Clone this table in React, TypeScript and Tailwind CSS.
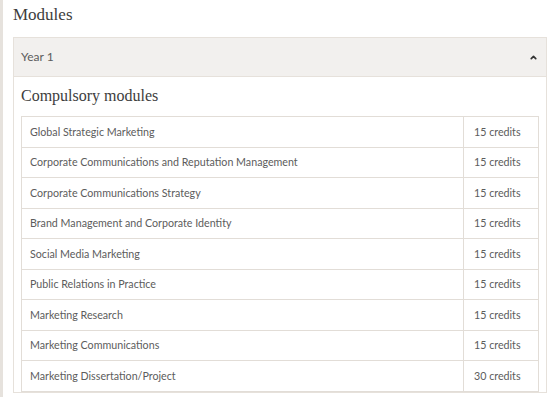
import { ChevronUp } from "lucide-react";

const MODULES: [string, number][] = [
  ["Global Strategic Marketing", 15],
  ["Corporate Communications and Reputation Management", 15],
  ["Corporate Communications Strategy", 15],
  ["Brand Management and Corporate Identity", 15],
  ["Social Media Marketing", 15],
  ["Public Relations in Practice", 15],
  ["Marketing Research", 15],
  ["Marketing Communications", 15],
  ["Marketing Dissertation/Project", 30],
];

export default function App() {
  return (
    <div className="h-[397px] w-[550px] overflow-hidden border-l-[3px] border-[#e6e2dd] bg-white pl-[10px] pr-[3px] font-['Lato',sans-serif] text-[#5c5c5c]">
      <h2 className="pt-[3px] font-['Liberation_Serif',serif] text-[17px] leading-[24px] text-[#3d3d3d]">
        Modules
      </h2>

      <div className="mt-[10px] border border-[#e6e1db]">
        {/* Accordion header */}
        <div className="flex h-[39px] items-center justify-between border-b border-[#e6e1db] bg-[#f2f0ee] pl-[7px] pr-[8px] text-[12px]">
          <span>Year 1</span>
          <ChevronUp className="h-[9px] w-[9px] text-[#333]" strokeWidth={4.5} />
        </div>

        {/* Body */}
        <div className="px-[7px] pt-[8px]">
          <h3 className="mb-[9px] font-['Liberation_Serif',serif] text-[16px] leading-[22px] text-[#3d3d3d]">
            Compulsory modules
          </h3>
          <table className="w-full border-collapse text-[10.7px]">
            <tbody>
              {MODULES.map(([name, credits]) => (
                <tr key={name} className="h-[30.5px]">
                  <td className="border border-[#e2ddd7] px-[8px]">{name}</td>
                  <td className="w-[75px] border border-[#e2ddd7] px-[10px]">
                    {credits} credits
                  </td>
                </tr>
              ))}
            </tbody>
          </table>
        </div>
      </div>
    </div>
  );
}
